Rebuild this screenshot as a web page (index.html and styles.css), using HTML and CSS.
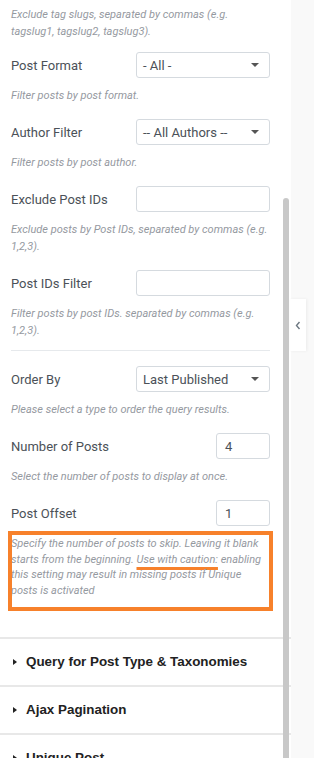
FILE: index.html
```html
<!DOCTYPE html>
<html lang="en">
<head>
    <meta charset="UTF-8">
    <meta name="viewport" content="width=device-width, initial-scale=1.0">
    <title>Query Settings</title>
    <link rel="stylesheet" href="styles.css">
</head>
<body>
    <div class="panel">
        <div class="content">
            <div class="desc first">Exclude tag slugs, separated by commas (e.g. tagslug1, tagslug2, tagslug3).</div>

            <div class="control top">
                <div class="row">
                    <label>Post Format</label>
                    <div class="select"><span>- All -</span><i class="caret"></i></div>
                </div>
                <div class="desc">Filter posts by post format.</div>
            </div>

            <div class="control">
                <div class="row">
                    <label>Author Filter</label>
                    <div class="select"><span>-- All Authors --</span><i class="caret"></i></div>
                </div>
                <div class="desc">Filter posts by post author.</div>
            </div>

            <div class="control">
                <div class="row">
                    <label>Exclude Post IDs</label>
                    <div class="input"></div>
                </div>
                <div class="desc">Exclude posts by Post IDs, separated by commas (e.g. 1,2,3).</div>
            </div>

            <div class="control">
                <div class="row">
                    <label>Post IDs Filter</label>
                    <div class="input"></div>
                </div>
                <div class="desc">Filter posts by post IDs. separated by commas (e.g. 1,2,3).</div>
            </div>

            <hr class="sep">

            <div class="control">
                <div class="row">
                    <label>Order By</label>
                    <div class="select"><span>Last Published</span><i class="caret"></i></div>
                </div>
                <div class="desc">Please select a type to order the query results.</div>
            </div>

            <div class="control">
                <div class="row">
                    <label>Number of Posts</label>
                    <div class="input small">4</div>
                </div>
                <div class="desc">Select the number of posts to display at once.</div>
            </div>

            <div class="control last">
                <div class="row">
                    <label>Post Offset</label>
                    <div class="input small">1</div>
                </div>
                <div class="desc note">Specify the number of posts to skip. Leaving it blank starts from the beginning. <span class="caution">Use with caution:</span> enabling this setting may result in missing posts if Unique posts is activated
                    <div class="annot"></div>
                </div>
            </div>
        </div>

        <div class="section"><i class="tri"></i>Query for Post Type &amp; Taxonomies</div>
        <div class="section"><i class="tri"></i>Ajax Pagination</div>
        <div class="section"><i class="tri"></i>Unique Post</div>

        <div class="scroll-thumb"></div>
    </div>
    <div class="side">
        <div class="toggle">
            <svg width="6" height="9" viewBox="0 0 6 9"><path d="M4.5 1 L1.5 4.5 L4.5 8" fill="none" stroke="#6d7882" stroke-width="1.4"/></svg>
        </div>
    </div>
</body>
</html>
```

FILE: styles.css
```css
body {
    margin: 0;
    font-family: 'Roboto', 'Liberation Sans', sans-serif;
    background-color: #f9f9f9;
    display: flex;
    height: 758px;
    overflow: hidden;
}
.panel {
    position: relative;
    width: 291px;
    height: 758px;
    background-color: white;
    overflow: hidden;
    flex-shrink: 0;
}
.content {
    padding: 6px 21px 0 11px;
}
.desc {
    font-size: 11px;
    line-height: 17px;
    font-style: italic;
    color: #95999f;
    margin-top: 9px;
}
.desc.first {
    margin-top: 0;
}
.control {
    margin-top: 15px;
}
.control.top {
    margin-top: 12px;
}
.row {
    display: flex;
    align-items: center;
    justify-content: space-between;
    height: 26px;
}
.row label {
    font-size: 13px;
    color: #4b5158;
}
.select, .input {
    box-sizing: border-box;
    width: 134px;
    height: 26px;
    border: 1px solid #d5dadf;
    border-radius: 3px;
    font-size: 13px;
    color: #4b5158;
    display: flex;
    align-items: center;
    padding: 0 6px;
}
.select {
    justify-content: space-between;
}
.input.small {
    width: 54px;
    padding-left: 8px;
}
.caret {
    width: 0;
    height: 0;
    border-left: 4px solid transparent;
    border-right: 4px solid transparent;
    border-top: 4px solid #555;
    margin-right: 4px;
}
.sep {
    border: none;
    border-top: 1px solid #e6e9ec;
    margin: 11px 0 0;
}
.note {
    position: relative;
    line-height: 15.7px;
    margin-top: 10px;
}
.caution {
    text-decoration: underline;
    text-decoration-color: #f7812b;
    text-decoration-thickness: 3px;
    text-underline-offset: 4px;
}
.annot {
    position: absolute;
    left: -3px;
    top: -5px;
    width: 265px;
    height: 80px;
    box-sizing: border-box;
    border: 4px solid #f7812b;
}
.control.last {
    margin-bottom: 38px;
}
.section {
    height: 48px;
    box-sizing: border-box;
    border-top: 2px solid #e8e8e8;
    display: flex;
    align-items: center;
    padding-left: 13px;
    font-family: 'Liberation Sans', Arial, sans-serif;
    font-weight: bold;
    font-size: 13.4px;
    color: #222;
}
.tri {
    width: 0;
    height: 0;
    border-top: 3.5px solid transparent;
    border-bottom: 3.5px solid transparent;
    border-left: 4px solid #222;
    margin-right: 9px;
}
.scroll-thumb {
    position: absolute;
    left: 283px;
    top: 198px;
    width: 6px;
    height: 600px;
    background-color: #c8c8c8;
    border-radius: 3px 3px 0 0;
}
.side {
    flex: 1;
    position: relative;
}
.toggle {
    position: absolute;
    left: -1px;
    top: 299px;
    width: 16px;
    height: 52px;
    background-color: white;
    box-shadow: 1px 0 3px rgba(0,0,0,0.06);
    display: flex;
    align-items: center;
    justify-content: center;
}
```
